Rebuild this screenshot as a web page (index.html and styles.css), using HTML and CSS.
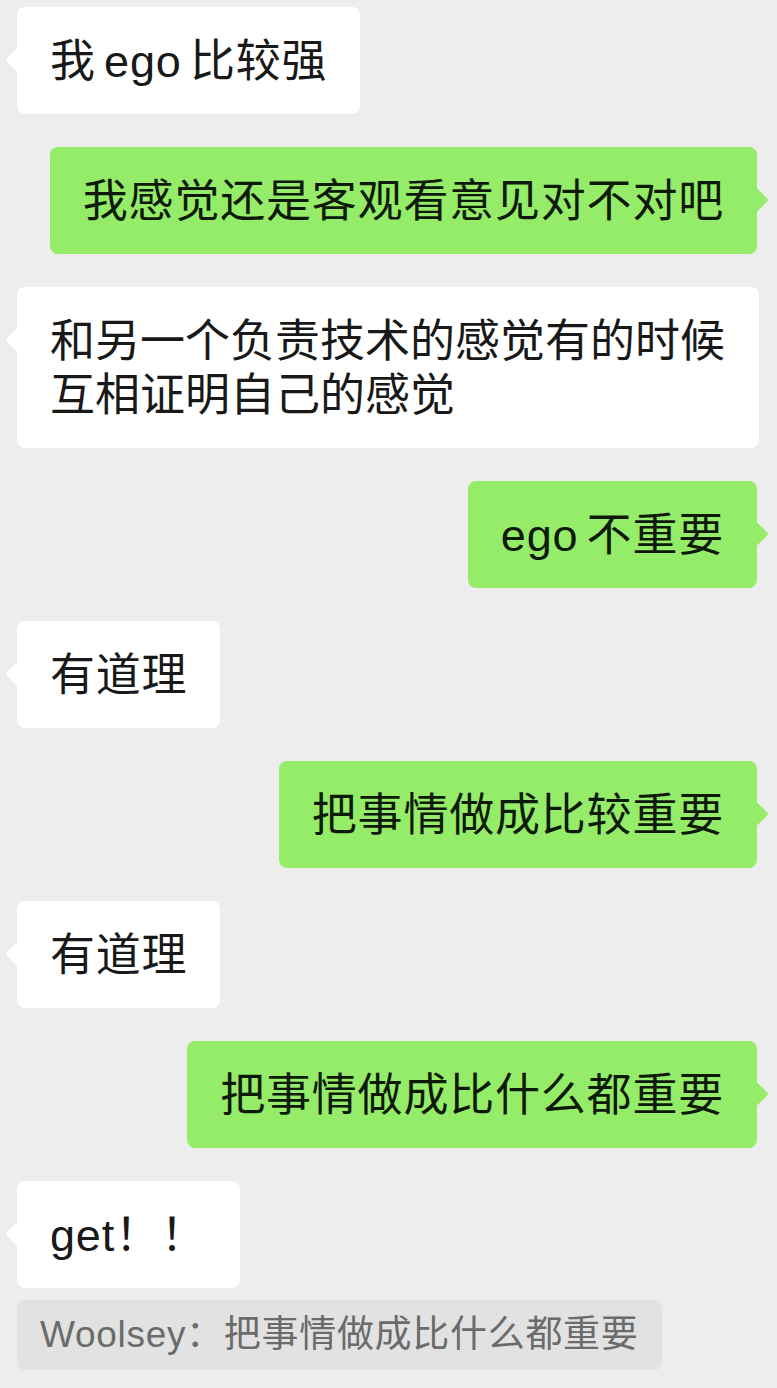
FILE: index.html
```html
<!DOCTYPE html>
<html lang="zh-CN">
<head>
<meta charset="utf-8">
<title>Chat</title>
<link rel="stylesheet" href="styles.css">
</head>
<body>
<main class="chat">
  <div class="bubble in">我 ego 比较强</div>
  <div class="bubble out">我感觉还是客观看意见对不对吧</div>
  <div class="bubble in wide">和另一个负责技术的感觉有的时候互相证明自己的感觉</div>
  <div class="bubble out">ego 不重要</div>
  <div class="bubble in">有道理</div>
  <div class="bubble out">把事情做成比较重要</div>
  <div class="bubble in">有道理</div>
  <div class="bubble out">把事情做成比什么都重要</div>
  <div class="group">
    <div class="bubble in">get！！</div>
    <div class="quote">Woolsey：把事情做成比什么都重要</div>
  </div>
</main>
</body>
</html>
```

FILE: styles.css
```css
html, body {
  margin: 0;
  padding: 0;
  background: #ededed;
}

body {
  width: 777px;
  height: 1388px;
  overflow: hidden;
  font-family: "Liberation Sans", "Noto Sans CJK SC", sans-serif;
}

.chat {
  display: flex;
  flex-direction: column;
  gap: 33px;
  padding: 7px 20px 0 17px;
}

.group {
  display: flex;
  flex-direction: column;
  align-items: flex-start;
  gap: 12px;
}

.bubble {
  position: relative;
  box-sizing: border-box;
  max-width: 742px;
  padding: 28px 33px 25px;
  border-radius: 8px;
  font-size: 45px;
  line-height: 54px;
  letter-spacing: 0.8px;
  word-spacing: -5px;
  color: #191919;
}

.bubble::before {
  content: "";
  position: absolute;
  top: 44px;
  width: 18px;
  height: 18px;
  border-radius: 2px;
  transform: rotate(45deg);
}

.bubble.in {
  align-self: flex-start;
  background: #ffffff;
}

.bubble.in::before {
  left: -8px;
  background: #ffffff;
}

.bubble.wide {
  margin-right: -2px;
  padding-right: 30px;
  letter-spacing: 0;
}

.bubble.out {
  align-self: flex-end;
  background: #95ec69;
  color: #0d1a08;
}

.bubble.out::before {
  right: -8px;
  background: #95ec69;
}

.quote {
  box-sizing: border-box;
  height: 70px;
  padding: 0 23px;
  border-radius: 8px;
  background: #e2e2e2;
  color: #6b6b6b;
  font-size: 37px;
  letter-spacing: 0.7px;
  line-height: 70px;
}
```
